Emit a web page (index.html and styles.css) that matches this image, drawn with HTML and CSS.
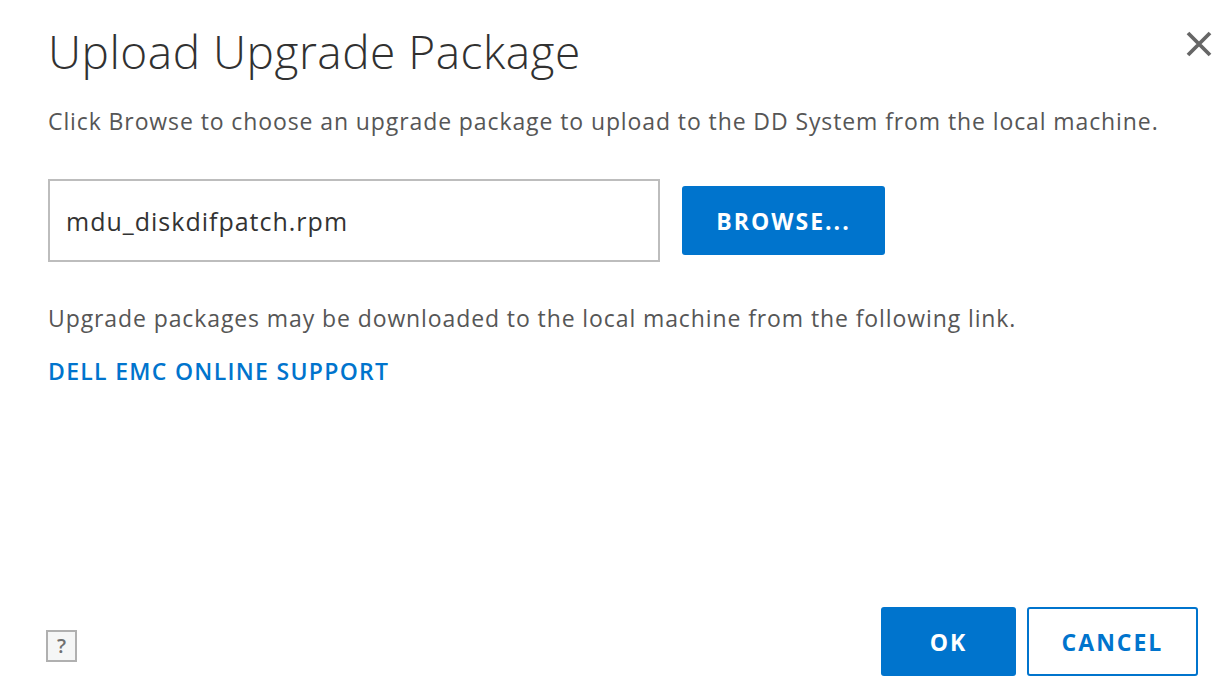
FILE: index.html
```html
<!DOCTYPE html>
<html lang="en">
<head>
    <meta charset="UTF-8">
    <meta name="viewport" content="width=device-width, initial-scale=1.0">
    <title>Upload Upgrade Package</title>
    <link rel="stylesheet" href="styles.css">
</head>
<body>
    <div class="modal">
        <div class="modal-header">
            <h1>Upload Upgrade Package</h1>
            <button class="close" aria-label="Close">
                <svg width="26" height="26" viewBox="0 0 26 26">
                    <path d="M2 2 L24 24 M24 2 L2 24" stroke="#666" stroke-width="3.8" fill="none"/>
                </svg>
            </button>
        </div>

        <div class="modal-body">
            <p class="intro">Click Browse to choose an upgrade package to upload to the DD System from the local machine.</p>

            <div class="file-row">
                <input type="text" class="file-name" value="mdu_diskdifpatch.rpm" readonly />
                <button class="btn btn-primary browse">BROWSE...</button>
            </div>

            <p class="note">Upgrade packages may be downloaded to the local machine from the following link.</p>
            <a class="support-link" href="#">DELL EMC ONLINE SUPPORT</a>
        </div>

        <div class="modal-footer">
            <span class="help">?</span>
            <div class="actions">
                <button class="btn btn-primary ok">OK</button>
                <button class="btn btn-outline cancel">CANCEL</button>
            </div>
        </div>
    </div>
</body>
</html>
```

FILE: styles.css
```css
body {
    margin: 0;
    font-family: "Open Sans", Lato, sans-serif;
    background-color: #fff;
    color: #565656;
}
.modal {
    height: 697px;
    box-sizing: border-box;
    padding: 0 33px 21px 48px;
    display: flex;
    flex-direction: column;
}
.modal-header {
    display: flex;
    justify-content: space-between;
    align-items: flex-start;
}
h1 {
    margin: 24px 0 0 0;
    font-size: 46px;
    font-weight: 300;
    letter-spacing: 0.5px;
    color: #313131;
    line-height: 54px;
}
.close {
    border: none;
    background: none;
    padding: 0;
    margin: 31px -14px 0 0;
    cursor: pointer;
}
.modal-body {
    flex: 1;
}
.intro, .note {
    font-size: 23px;
    letter-spacing: 0.9px;
    line-height: 28px;
    margin: 0;
}
.intro {
    margin-top: 29px;
}
.file-row {
    display: flex;
    align-items: center;
    gap: 22px;
    margin-top: 44px;
}
.file-name {
    width: 612px;
    height: 83px;
    box-sizing: border-box;
    border: 2px solid #bdbdbd;
    padding: 0 16px;
    font-family: "Open Sans", Lato, sans-serif;
    font-size: 25px;
    letter-spacing: 1px;
    color: #333;
    outline: none;
}
.btn {
    font-family: "Open Sans", Lato, sans-serif;
    font-weight: 700;
    font-size: 23px;
    letter-spacing: 2px;
    border-radius: 3px;
    cursor: pointer;
    box-sizing: border-box;
}
.btn-primary {
    background-color: #0074cd;
    border: none;
    color: #fff;
}
.btn-outline {
    background-color: #fff;
    border: 2px solid #0074cd;
    color: #0074cd;
}
.browse {
    width: 203px;
    height: 69px;
}
.note {
    margin-top: 42px;
}
.support-link {
    display: inline-block;
    margin-top: 23px;
    font-size: 23px;
    font-weight: 600;
    letter-spacing: 1.3px;
    color: #0074cd;
    text-decoration: none;
}
.modal-footer {
    display: flex;
    justify-content: space-between;
    align-items: center;
}
.help {
    width: 31px;
    height: 32px;
    box-sizing: border-box;
    margin-left: -2px;
    margin-top: 8px;
    border: 2px solid #b0b0b0;
    background-color: #f5f6f6;
    color: #707070;
    font-size: 20px;
    font-weight: 600;
    display: flex;
    align-items: center;
    justify-content: center;
}
.actions {
    display: flex;
    gap: 11px;
}
.ok {
    width: 135px;
    height: 69px;
}
.cancel {
    width: 171px;
    height: 69px;
}
```
